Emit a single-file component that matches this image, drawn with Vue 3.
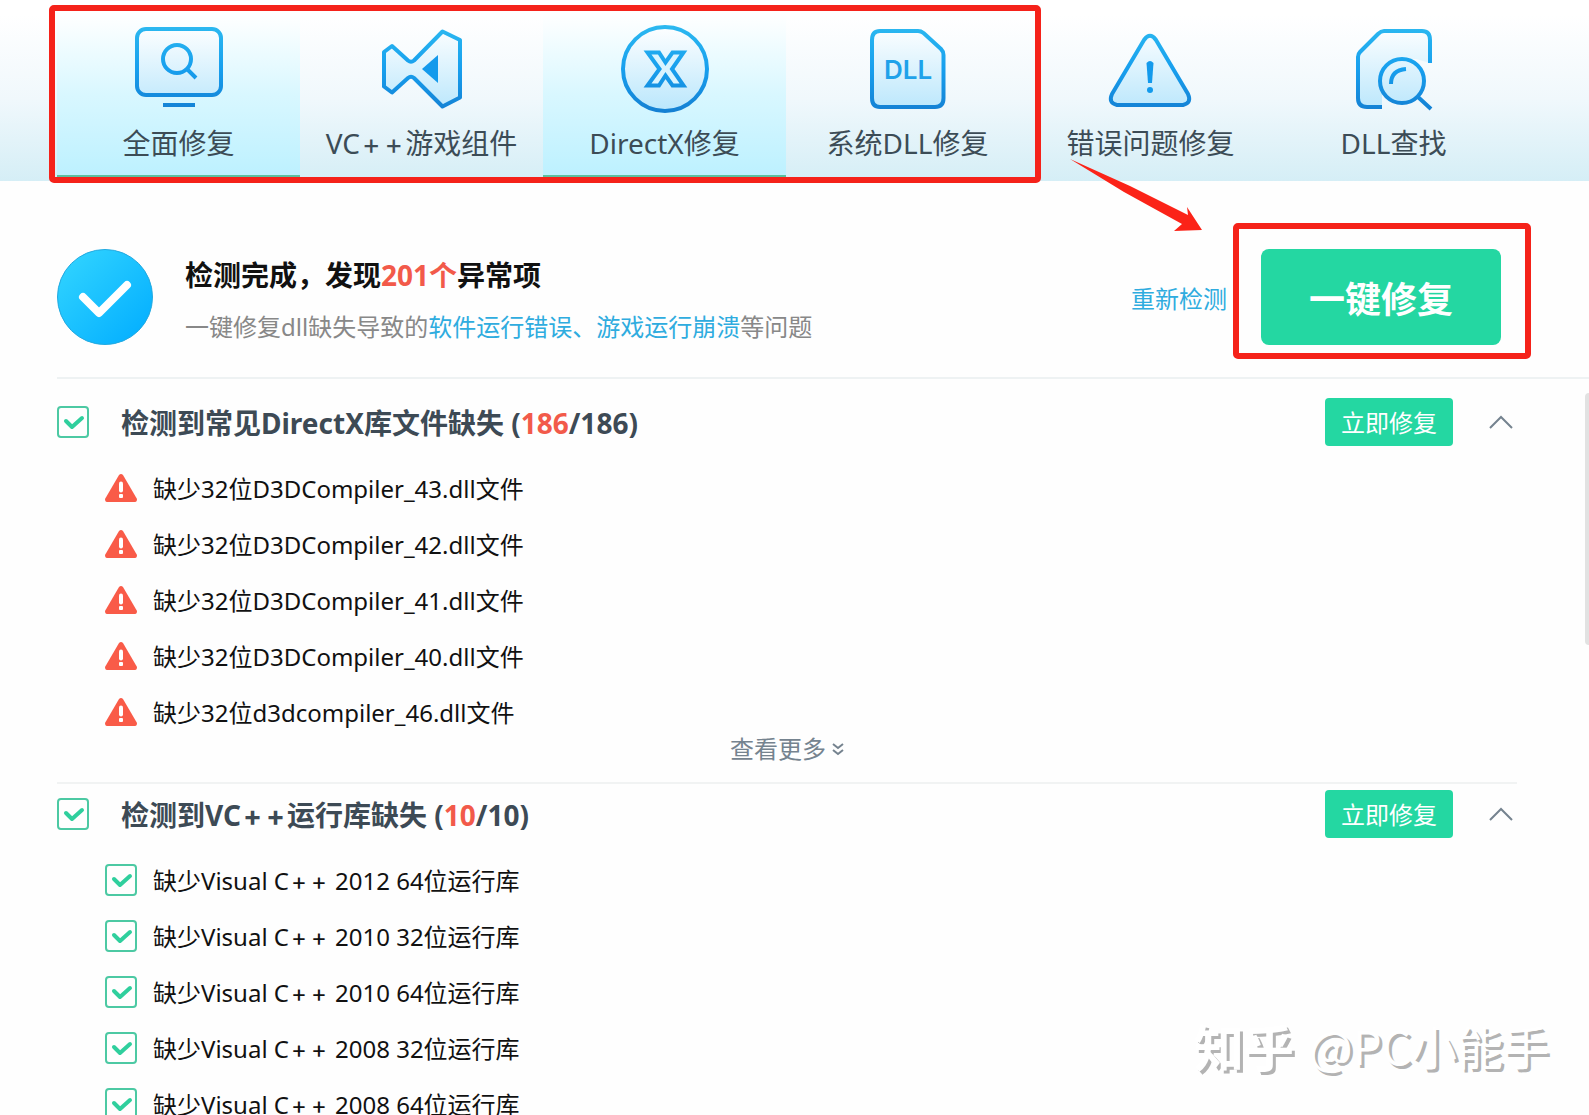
<script setup>
import { ref } from 'vue'

const tabs = [
  { id: 'full', label: ['全面修复'], active: true },
  { id: 'vc', label: ['VC', '+', '+', '游戏组件'] },
  { id: 'dx', label: ['DirectX修复'], active: true },
  { id: 'dll', label: ['系统DLL修复'] },
  { id: 'error', label: ['错误问题修复'] },
  { id: 'search', label: ['DLL查找'] }
]

const sections = ref([
  {
    id: 'directx',
    title: ['检测到常见DirectX库文件缺失'],
    count: 186,
    checked: true,
    warn: true,
    items: [
      { label: ['缺少32位D3DCompiler_43.dll文件'] },
      { label: ['缺少32位D3DCompiler_42.dll文件'] },
      { label: ['缺少32位D3DCompiler_41.dll文件'] },
      { label: ['缺少32位D3DCompiler_40.dll文件'] },
      { label: ['缺少32位d3dcompiler_46.dll文件'] }
    ]
  },
  {
    id: 'vc',
    title: ['检测到VC', '+', '+', '运行库缺失'],
    count: 10,
    checked: true,
    warn: false,
    items: [
      { label: ['缺少Visual C', '+', '+', ' 2012 64位运行库'], checked: true },
      { label: ['缺少Visual C', '+', '+', ' 2010 32位运行库'], checked: true },
      { label: ['缺少Visual C', '+', '+', ' 2010 64位运行库'], checked: true },
      { label: ['缺少Visual C', '+', '+', ' 2008 32位运行库'], checked: true },
      { label: ['缺少Visual C', '+', '+', ' 2008 64位运行库'], checked: true }
    ]
  }
])
</script>

<template>
  <div class="app">
    <svg class="defs" width="0" height="0" aria-hidden="true">
      <defs>
        <linearGradient id="line" gradientUnits="userSpaceOnUse" x1="0" y1="0" x2="0" y2="88">
          <stop offset="0" stop-color="#2cb9f0" />
          <stop offset="0.5" stop-color="#179fee" />
          <stop offset="1" stop-color="#147fd2" />
        </linearGradient>
        <linearGradient id="tint" gradientUnits="userSpaceOnUse" x1="0" y1="0" x2="0" y2="88">
          <stop offset="0" stop-color="#ffffff" />
          <stop offset="1" stop-color="#b8e6fc" />
        </linearGradient>
        <linearGradient id="disc" x1="0" y1="0" x2="1" y2="1">
          <stop offset="0.1" stop-color="#2fd2ff" />
          <stop offset="0.9" stop-color="#05b0ff" />
        </linearGradient>
      </defs>
    </svg>

    <header class="header">
      <nav class="tabs">
        <button v-for="tab in tabs" :key="tab.id" type="button" class="tab" :class="{ active: tab.active }">
          <svg class="tab-icon" viewBox="0 0 88 88" aria-hidden="true">
            <g v-if="tab.id === 'full'">
              <rect class="shape" x="2" y="4" width="84" height="66" rx="9" />
              <circle class="stroke" cx="42" cy="34" r="14" />
              <path class="stroke" d="M52 44 61 53M28 80H60" />
            </g>
            <g v-else-if="tab.id === 'vc'">
              <path class="shape" d="M6 27 14 21 30 35.500Q33 38 36 35.500L64.500 6.500 82 15V72.500L64.500 81.500 36 53Q33 50.500 30 53L14 67.500 6 61.500Z" />
              <path class="solid" d="M44 44 60 30V58Z" />
            </g>
            <g v-else-if="tab.id === 'dx'">
              <circle class="shape" cx="44" cy="44" r="42" />
              <path class="thin" d="M26.500 27.500H38L44.500 37.500 51.500 27.500H62.500L51 44 62.500 60.500H51.500L44.500 50.500 38 60.500H26.500L38.500 44Z" />
            </g>
            <g v-else-if="tab.id === 'dll'">
              <path class="shape" d="M16 6H54Q57 6 59.500 8L77 24Q79.500 26.500 79.500 30V73Q79.500 82 71 82H16Q8 82 8 73V15Q8 6 16 6Z" />
              <text class="glyph" x="44" y="54" text-anchor="middle">DLL</text>
            </g>
            <g v-else-if="tab.id === 'error'">
              <path class="shape" d="M37 15Q43 6.500 49 15L81 69Q85 78 76 80H10Q1 78 5 69Z" />
              <path class="solid" d="M39.500 38Q43 34 46.500 38L45 58H41Z" />
              <circle class="solid" cx="43" cy="65" r="3" />
            </g>
            <g v-else>
              <path class="tint" d="M31 6H72Q80 6 80 15V38L66 34H46L32 46V82H17Q9 82 9 73V31Q9 28 12 25Z" />
              <path class="stroke" d="M32 82H17Q8 82 8 73V32Q8 29 10 27L28 9Q31 6 34 6H72Q80 6 80 15V38M68 72 81 84" />
              <circle class="shape" cx="52" cy="56" r="22" />
              <path class="stroke" d="M56 44Q41 45 41 59" />
            </g>
          </svg>
          <span class="tab-label"><span v-for="(part, i) in tab.label" :key="i" :class="{ plus: part === '+' }">{{ part }}</span></span>
        </button>
      </nav>
      <div class="mark mark-tabs"></div>
      <svg class="arrow" viewBox="0 0 132 73" aria-hidden="true">
        <path d="M0 0 60 27 118 56 117 48 132 71 104 72 112 65 54 33Z" />
      </svg>
    </header>

    <section class="summary">
      <svg class="summary-icon" viewBox="0 0 96 96" aria-hidden="true">
        <circle cx="48" cy="48" r="47.500" fill="url(#disc)" stroke="#22a9e0" stroke-width="1" />
        <path d="M26 48 42 64 70 36" fill="none" stroke="#fff" stroke-width="8" stroke-linecap="round" stroke-linejoin="round" />
      </svg>
      <div class="summary-text">
        <h1>检测完成，发现<em>201个</em>异常项</h1>
        <p>一键修复dll缺失导致的<strong>软件运行错误、游戏运行崩溃</strong>等问题</p>
      </div>
      <a class="recheck" href="#">重新检测</a>
      <div class="fix-all-wrap">
        <button type="button" class="fix-all">一键修复</button>
        <div class="mark mark-fix"></div>
      </div>
    </section>

    <main class="results">
      <section v-for="section in sections" :key="section.id" class="group">
        <div class="group-head">
          <span class="check">
            <input :id="section.id" v-model="section.checked" type="checkbox" />
            <svg v-if="section.checked" viewBox="0 0 32 32" aria-hidden="true"><path d="M9 15 15 21 25 12" /></svg>
          </span>
          <label class="group-title" :for="section.id"><span v-for="(part, i) in section.title" :key="i" :class="{ plus: part === '+' }">{{ part }}</span> (<em>{{ section.count }}</em>/{{ section.count }})</label>
          <button type="button" class="fix">立即修复</button>
          <button type="button" class="fold" aria-label="收起">
            <svg viewBox="0 0 24 14" aria-hidden="true"><path d="M1 13 12 2 23 13" /></svg>
          </button>
        </div>
        <ul class="items">
          <li v-for="(item, n) in section.items" :key="n">
            <svg v-if="section.warn" class="warn" viewBox="0 0 32 32" aria-hidden="true">
              <path d="M14 3Q16 1 18 3L32 27Q32 30 30 30H2Q0 30 0 27Z" fill="#f95b48" />
              <path d="M16 11.500V18.500" stroke="#fff" stroke-width="4" stroke-linecap="round" />
              <rect x="14" y="22" width="4" height="4" rx="1" fill="#fff" />
            </svg>
            <span v-else class="check">
              <input :id="section.id + n" v-model="item.checked" type="checkbox" />
              <svg v-if="item.checked" viewBox="0 0 32 32" aria-hidden="true"><path d="M9 15 15 21 25 12" /></svg>
            </span>
            <component :is="section.warn ? 'span' : 'label'" class="item-text" :for="section.warn ? null : section.id + n"><span v-for="(part, i) in item.label" :key="i" :class="{ plus: part === '+' }">{{ part }}</span></component>
          </li>
        </ul>
        <button v-if="section.warn" type="button" class="more">
          查看更多
          <svg viewBox="0 0 12 14" aria-hidden="true"><path d="M1 2 6 6 11 2M1 8 6 12 11 8" /></svg>
        </button>
      </section>
      <div class="thumb"></div>
    </main>

    <div class="watermark"><span class="brand">知乎</span><span>@PC小能手</span></div>
  </div>
</template>

<style>
body {
  background: #fefefe;
}
</style>

<style scoped>
.app {
  position: relative;
  display: flex;
  flex-direction: column;
  height: 100vh;
  overflow: hidden;
  color: #111;
  font-family: "Noto Sans", "Noto Sans CJK SC", sans-serif;
  font-size: 24px;
  line-height: 32px;
}
.defs {
  position: absolute;
}
button {
  padding: 0;
  border: 0;
  background: none;
  color: inherit;
  font: inherit;
  cursor: pointer;
}
em,
strong {
  font-style: normal;
  font-weight: inherit;
}
em {
  color: #f25a4a;
}
.plus {
  margin: 0 2px;
  font-family: Inter, "Noto Sans", sans-serif;
}

.header {
  position: relative;
  flex: none;
  background: linear-gradient(#fff 8%, #f0f8fc 55%, #d5eef6);
}
.tabs {
  display: flex;
  padding-left: 57px;
}
.tab {
  display: flex;
  flex: 0 0 243px;
  flex-direction: column;
  align-items: center;
  gap: 10px;
  padding: 25px 0 12px;
  border-bottom: 6px solid transparent;
}
.tab.active {
  border-bottom-color: #5cc0a0;
  background: linear-gradient(#fff 8%, #d8f7ff 55%, #bdf1ff);
}
.tab-icon {
  width: 88px;
  height: 88px;
}
.tab-label {
  color: #3c4c56;
  font-size: 28px;
  line-height: 40px;
  white-space: nowrap;
}
.shape,
.stroke,
.thin {
  fill: none;
  stroke: url(#line);
  stroke-width: 4;
  stroke-linejoin: round;
}
.shape {
  fill: url(#tint);
}
.thin {
  fill: #d9f4ff;
  stroke-linejoin: miter;
}
.tint {
  fill: url(#tint);
}
.solid {
  fill: #139aec;
}
.glyph {
  fill: #1fa2ea;
  font-family: Inter, sans-serif;
  font-size: 26px;
  font-weight: 600;
}

.mark {
  position: absolute;
  border: 6px solid #f5221a;
  border-radius: 5px;
  pointer-events: none;
}
.mark-tabs {
  top: 5px;
  bottom: -2px;
  left: 49px;
  width: 980px;
}
.arrow {
  position: absolute;
  top: 159px;
  left: 1070px;
  width: 132px;
  height: 73px;
  fill: #fb2318;
}

.summary {
  display: flex;
  flex: none;
  align-items: center;
  margin-left: 57px;
  padding: 68px 88px 32px 0;
  border-bottom: 2px solid #eef2f3;
}
.summary-icon {
  width: 96px;
  height: 96px;
  margin-right: 32px;
}
.summary-text {
  flex: 1;
  padding-top: 4px;
}
h1,
p {
  margin: 0;
}
h1 {
  margin-bottom: 16px;
  font-size: 28px;
  font-weight: 700;
  line-height: 40px;
}
p {
  color: #888;
}
.summary strong,
.recheck {
  color: #2facdf;
}
.recheck {
  margin-right: 34px;
  padding-top: 4px;
  text-decoration: none;
}
.fix-all-wrap {
  position: relative;
}
.fix-all {
  display: block;
  width: 240px;
  height: 96px;
  padding-top: 6px;
  border-radius: 8px;
  background: #24d7a2;
  color: #fff;
  font-size: 36px;
  font-weight: 700;
}
.mark-fix {
  inset: -26px -30px -14px -28px;
}

.results {
  position: relative;
  flex: 1;
  min-height: 0;
  padding: 13px 72px 0 57px;
  overflow: hidden;
}
.group + .group {
  border-top: 2px solid #f1f3f3;
}
.group-head {
  display: flex;
  align-items: center;
  height: 60px;
  margin-bottom: 12px;
}
.check {
  display: grid;
  flex: none;
  width: 32px;
  height: 32px;
}
.check input {
  grid-area: 1 / 1;
  width: 32px;
  height: 32px;
  margin: 0;
  border: 2px solid #4cc9a3;
  border-radius: 4px;
  appearance: none;
}
.check svg {
  grid-area: 1 / 1;
  fill: none;
  stroke: #2fcf9d;
  stroke-width: 4;
  stroke-linecap: round;
  stroke-linejoin: round;
  pointer-events: none;
}
.group-title {
  flex: 1;
  margin-left: 32px;
  padding-top: 2px;
  color: #3d4a55;
  font-size: 28px;
  font-weight: 700;
  line-height: 40px;
}
.fix {
  width: 128px;
  height: 48px;
  padding-top: 2px;
  border-radius: 4px;
  background: #24d7a2;
  color: #fff;
}
.fold {
  display: grid;
  place-items: center;
  width: 32px;
  height: 32px;
  margin-left: 32px;
}
.fold svg {
  width: 24px;
  height: 14px;
}
.fold svg,
.more svg {
  fill: none;
  stroke: #75838f;
  stroke-width: 2;
}
.items {
  display: flex;
  flex-direction: column;
  gap: 8px;
  margin: 0;
  padding: 0 0 0 48px;
  list-style: none;
}
.items li {
  display: flex;
  align-items: center;
  gap: 16px;
  height: 48px;
}
.warn {
  width: 32px;
  height: 32px;
}
.item-text {
  padding-top: 2px;
  white-space: pre;
}
.more {
  display: flex;
  align-items: center;
  gap: 6px;
  margin: 0 auto 20px;
  color: #75838f;
  line-height: 26px;
}
.more svg {
  width: 12px;
  height: 14px;
}
.thumb {
  position: absolute;
  top: 14px;
  right: 0;
  width: 4px;
  height: 252px;
  border-radius: 4px 0 0 4px;
  background: #e2e2e2;
}

.tabs .tab {
  padding-bottom: 11px;
}

.watermark {
  position: absolute;
  right: 40px;
  bottom: 38px;
  display: flex;
  align-items: center;
  gap: 15px;
  color: #fff;
  font-family: "Noto Sans CJK SC", sans-serif;
  font-size: 46px;
  line-height: 64px;
  text-shadow: 3px 3px 0 #b3b3b3;
  pointer-events: none;
}
.brand {
  font-size: 50px;
  font-weight: 700;
}
</style>
